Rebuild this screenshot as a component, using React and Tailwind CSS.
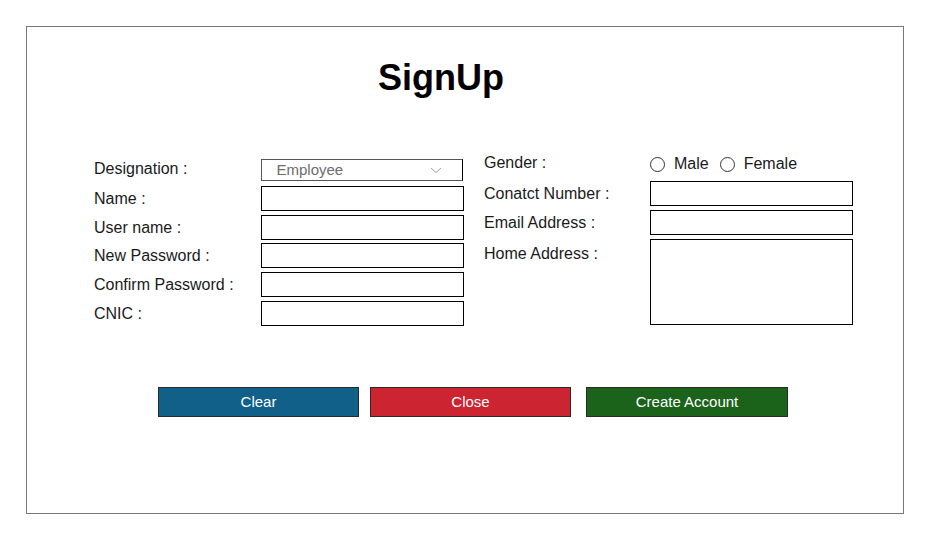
import React from "react";

const LEFT_ROWS = [
  { label: "Name :", mt: "mt-[5px]" },
  { label: "User name :", mt: "mt-[4px]" },
  { label: "New Password :", mt: "mt-[3px]" },
  { label: "Confirm Password :", mt: "mt-[4px]" },
  { label: "CNIC :", mt: "mt-[4px]" },
];

function Radio({ label }) {
  return (
    <label className="flex items-center gap-[9px]">
      <span className="w-[15px] h-[15px] rounded-full border border-[#333] bg-white" />
      <span>{label}</span>
    </label>
  );
}

export default function App() {
  return (
    <div className="w-[930px] h-[540px] bg-white pt-[26px] pl-[26px] font-['Liberation_Sans',Arial,sans-serif] text-[16px] leading-4 text-[#1a1a1a]">
      <div className="w-[878px] h-[488px] border border-[#777] flex flex-col">
        {/* Title */}
        <h1 className="mt-[33px] pl-[351px] text-[36px] leading-9 font-bold text-black">
          SignUp
        </h1>

        {/* Form columns */}
        <div className="mt-[58px] pl-[67px] flex items-start gap-[21px]">
          {/* Left column */}
          <div className="w-[369px] pt-[5px] flex flex-col">
            <div className="flex items-center h-[22px]">
              <span className="w-[167px] -mt-[3px]">Designation :</span>
              <div className="w-[203px] h-[22px] border border-[#555] border-r-black flex items-center justify-between pl-[15px] pr-[20px] text-[15px] text-[#6d6d6d]">
                <span>Employee</span>
                <svg width="12" height="7" viewBox="0 0 12 7" fill="none">
                  <path d="M1 1l5 4.5L11 1" stroke="#9a9a9a" strokeWidth="1" />
                </svg>
              </div>
            </div>
            {LEFT_ROWS.map((row) => (
              <div key={row.label} className={`flex items-center h-[25px] ${row.mt}`}>
                <span className="w-[167px] shrink-0">{row.label}</span>
                <input className="w-[203px] h-[25px] border border-black bg-white outline-none" />
              </div>
            ))}
          </div>

          {/* Right column */}
          <div className="w-[369px] flex flex-col">
            <div className="flex items-center h-[20px]">
              <span className="w-[166px] -mt-[2px]">Gender :</span>
              <div className="flex items-center gap-[11px]">
                <Radio label="Male" />
                <Radio label="Female" />
              </div>
            </div>
            <div className="flex items-center h-[25px] mt-[7px]">
              <span className="w-[166px] shrink-0">Conatct Number :</span>
              <input className="w-[203px] h-[25px] border border-black bg-white outline-none" />
            </div>
            <div className="flex items-center h-[25px] mt-[4px]">
              <span className="w-[166px] shrink-0">Email Address :</span>
              <input className="w-[203px] h-[25px] border border-black bg-white outline-none" />
            </div>
            <div className="flex items-start mt-[4px]">
              <span className="w-[166px] shrink-0 mt-[7px]">Home Address :</span>
              <textarea className="w-[203px] h-[86px] border border-black bg-white outline-none resize-none" />
            </div>
          </div>
        </div>

        {/* Buttons */}
        <div className="mt-[61px] pl-[131px] flex items-center text-[15px] leading-4 text-white">
          <button className="w-[201px] h-[30px] bg-[#10608a] border border-[#2a2a2a]">
            Clear
          </button>
          <button className="ml-[11px] w-[201px] h-[30px] bg-[#cc2431] border border-[#2a2a2a]">
            Close
          </button>
          <button className="ml-[15px] w-[202px] h-[30px] bg-[#1b621b] border border-[#2a2a2a]">
            Create Account
          </button>
        </div>
      </div>
    </div>
  );
}
